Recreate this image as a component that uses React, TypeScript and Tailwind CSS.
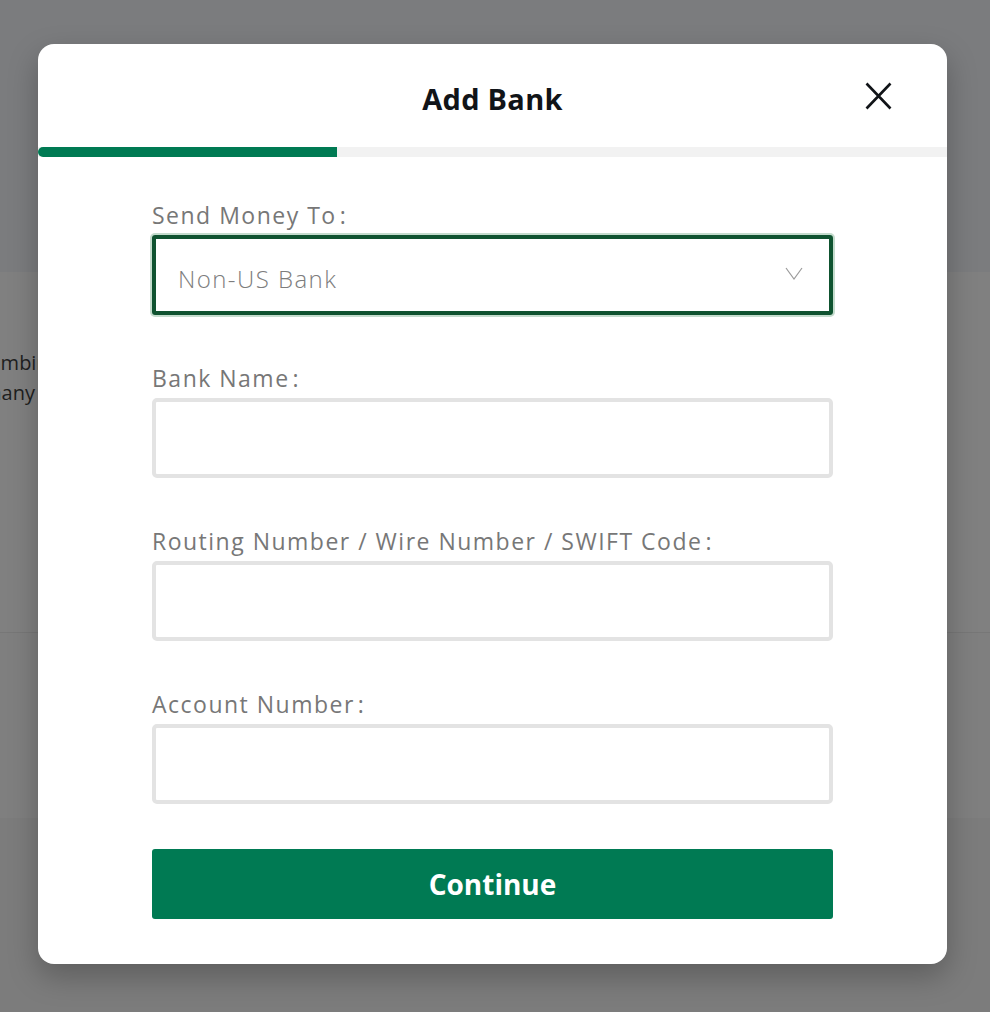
const fields = [
  "Bank Name",
  "Routing Number / Wire Number / SWIFT Code",
  "Account Number",
];

const Label = ({ text }: { text: string }) => (
  <p className="mb-[5px] h-[30px] text-[23px] leading-[30px] tracking-[0.065em] text-[#777777]">
    {text}
    <span className="ml-[3px]">:</span>
  </p>
);

const AddBankModal = () => {
  return (
    <div className="flex h-[920px] w-[909px] flex-col overflow-hidden rounded-[16px] bg-white shadow-[0_12px_30px_rgba(0,0,0,0.25)]">
      <div className="relative flex h-[103px] items-center justify-center pt-[6px]">
        <h2 className="text-[29px] font-bold tracking-[0.01em] text-[#111418]">Add Bank</h2>
        <button className="absolute top-[38px] right-[55px] flex size-[28px] items-center justify-center">
          <svg width="27" height="28" viewBox="0 0 27 28" fill="none">
            <path
              d="M1.5 1.5 L25.5 26.5 M25.5 1.5 L1.5 26.5"
              stroke="#111418"
              strokeWidth="2.6"
            />
          </svg>
        </button>
      </div>

      <div className="h-[10px] bg-[#f2f2f2]">
        <div className="h-full w-[299px] rounded-l-full bg-[#007a53]" />
      </div>

      <div className="flex flex-col px-[114px] pt-[43px]">
        <div className="flex flex-col">
          <Label text="Send Money To" />
          <div className="flex h-[80px] items-center justify-between rounded-[3px] border-4 border-[#0f5330] pr-[26px] pl-[22px] shadow-[0_0_0_2px_#c4dccd]">
            <span className="mt-[8px] text-[24px] font-light tracking-[0.06em] text-[#7d7d7d]">
              Non-US Bank
            </span>
            <svg width="18" height="13" viewBox="0 0 18 13" fill="none" className="-mt-[4px]">
              <path d="M1 1 L9 12 L17 1" stroke="#9b9b9b" strokeWidth="1.2" />
            </svg>
          </div>
        </div>

        {fields.map((f) => (
          <div key={f} className="mt-[48px] flex flex-col">
            <Label text={f} />
            <input className="h-[80px] rounded-[5px] border-4 border-[#e3e3e3] px-4 text-[22px] outline-none" />
          </div>
        ))}

        <button className="mt-[45px] h-[70px] rounded-[3px] bg-[#007a53] text-[28px] font-bold text-white">
          Continue
        </button>
      </div>
    </div>
  );
};

export default function App() {
  return (
    <div className="relative h-[1012px] overflow-hidden bg-[#808080] font-['Open_Sans',sans-serif]">
      <div className="h-[272px] bg-[#7b7c7e]" />
      <div className="h-[361px] border-b border-[#777777] pt-[76px] text-[20px] leading-[30px] text-[#1e1f21]">
        <p className="-ml-[21px]">combining</p>
        <p className="-ml-[17px]">many</p>
      </div>
      <div className="h-[185px] bg-[#7f7f7f]" />
      <div className="h-[194px] bg-[#7c7c7c]" />

      <div className="absolute inset-0 pt-[44px] pl-[38px]">
        <AddBankModal />
      </div>
    </div>
  );
}
